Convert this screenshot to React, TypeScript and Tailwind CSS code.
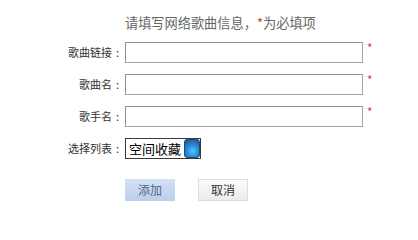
import React from 'react';

const font = { fontFamily: '"SimSun", "Noto Sans CJK SC", sans-serif' };

const Label: React.FC<{ text: string }> = ({ text }) => (
  <label className="flex w-[125px] justify-end pr-[2px] text-[11px] text-[#333]">
    <span>{text}</span>
    <span className="w-[11px] text-center">:</span>
  </label>
);

const Field: React.FC<{ label: string }> = ({ label }) => (
  <div className="flex h-[21px] items-center">
    <Label text={label} />
    <input
      type="text"
      className="h-[21px] w-[238px] border border-[#a5a5a5] border-t-[#8f8f8f] border-l-[#8f8f8f] bg-white outline-none"
    />
    <span className="ml-[4px] -mt-[9px] text-[12px] text-[#cc4444]">*</span>
  </div>
);

export default function App() {
  return (
    <div className="h-[223px] w-[418px] bg-white pt-[14px]" style={font}>
      <div className="ml-[125px] h-[18px] text-[13.2px] leading-[18px] text-[#666]">
        请填写网络歌曲信息，<span className="text-[#d03a3a]">*</span>为必填项
      </div>
      <div className="mt-[10px] flex flex-col gap-[11px]">
        <Field label="歌曲链接" />
        <Field label="歌曲名" />
        <Field label="歌手名" />
        <div className="flex h-[21px] items-center">
          <Label text="选择列表" />
          <div className="flex h-[21px] w-[76px] items-stretch border border-[#3a3a3a] bg-white">
            <span className="flex-1 pl-[3px] text-[13px] leading-[19px] text-black">空间收藏</span>
            <span className="w-[16px] rounded-[3px] border border-[#274a6e] bg-[radial-gradient(circle_at_55%_65%,#4fc8ff_0%,#2a8ad8_45%,#1d4f86_100%)]" />
          </div>
        </div>
      </div>
      <div className="ml-[125px] mt-[20px] flex gap-[23px]">
        <button className="h-[22px] w-[50px] bg-gradient-to-b from-[#d3e1f2] to-[#bccfea] text-[12px] text-[#506687]">
          添加
        </button>
        <button className="h-[22px] w-[50px] border border-[#dedede] bg-gradient-to-b from-[#fbfbfb] to-[#ececec] text-[12px] text-[#333]">
          取消
        </button>
      </div>
    </div>
  );
}
